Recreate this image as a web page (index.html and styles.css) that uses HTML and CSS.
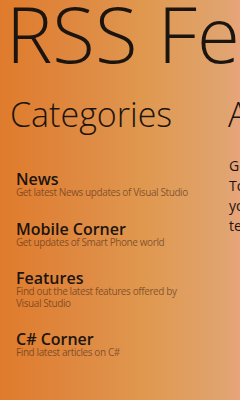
FILE: index.html
```html
<!DOCTYPE html>
<html>
<head>
<meta charset="utf-8">
<link rel="stylesheet" href="styles.css">
</head>
<body>
<div class="panorama">
  <h1 class="title">RSS Feeds</h1>
  <div class="sections">
    <section class="section">
      <h2 class="section-title">Categories</h2>
      <ul class="items">
        <li class="item">
          <div class="item-title">News</div>
          <div class="item-sub">Get latest News updates of Visual Studio</div>
        </li>
        <li class="item">
          <div class="item-title">Mobile Corner</div>
          <div class="item-sub">Get updates of Smart Phone world</div>
        </li>
        <li class="item">
          <div class="item-title">Features</div>
          <div class="item-sub">Find out the latest features offered by<br>Visual Studio</div>
        </li>
        <li class="item">
          <div class="item-title">C# Corner</div>
          <div class="item-sub">Find latest articles on C#</div>
        </li>
      </ul>
    </section>
    <section class="section">
      <h2 class="section-title">About</h2>
      <p class="about-text">Get all your favourite feeds<br>Top stories delivered to<br>you, anytime, with the latest<br>technology news.</p>
    </section>
  </div>
</div>
</body>
</html>
```
FILE: styles.css
```css
html, body {
  margin: 0;
  padding: 0;
}
body {
  width: 240px;
  height: 400px;
  overflow: hidden;
  font-family: "Open Sans", "Noto Sans", sans-serif;
}
.panorama {
  width: 240px;
  height: 400px;
  overflow: hidden;
  background: linear-gradient(to right, #df7b2c 0%, #df8a43 35%, #e0984f 60%, #e0a470 94%, #e9a47b 100%);
  color: #1c140f;
}
.title {
  margin: -6px 0 0 0;
  padding-left: 6px;
  font-size: 78px;
  font-weight: 300;
  line-height: 78px;
  white-space: nowrap;
}
.sections {
  display: flex;
  padding-left: 10px;
  margin-top: 25px;
}
.section {
  flex: 0 0 218px;
}
.section-title {
  margin: 0;
  font-size: 34px;
  font-weight: 300;
  line-height: 34px;
  white-space: nowrap;
}
.items {
  list-style: none;
  margin: 40px 0 0 0;
  padding: 0 0 0 6px;
  display: flex;
  flex-direction: column;
  gap: 22px;
}
.item-title {
  font-size: 16px;
  font-weight: 600;
  line-height: 16px;
}
.item-sub {
  font-size: 10px;
  line-height: 11.5px;
  letter-spacing: -0.4px;
  color: rgba(70, 40, 20, 0.62);
}
.about-text {
  margin: 25px 0 0 1px;
  font-size: 14px;
  line-height: 20px;
  white-space: nowrap;
}
```
